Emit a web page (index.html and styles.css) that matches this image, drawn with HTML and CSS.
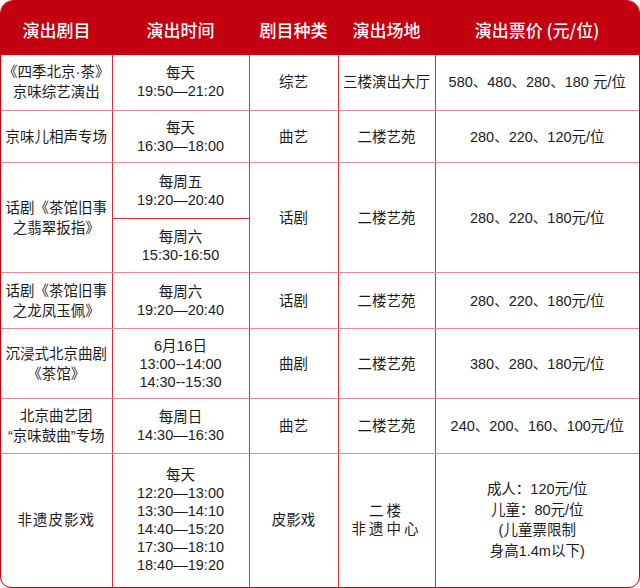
FILE: index.html
```html
<!DOCTYPE html>
<html lang="zh">
<head>
<meta charset="utf-8">
<title>演出信息</title>
<link rel="stylesheet" href="styles.css">
</head>
<body>
<div class="wrap">
<table class="sched">
<colgroup>
<col class="c-name"><col class="c-time"><col class="c-kind"><col class="c-venue"><col class="c-price">
</colgroup>
<thead>
<tr class="r-head">
<th>演出剧目</th><th>演出时间</th><th>剧目种类</th><th>演出场地</th><th>演出票价 (元/位)</th>
</tr>
</thead>
<tbody>
<tr class="r1">
<td class="name first">《四季北京·茶》<br>京味综艺演出</td>
<td class="time">每天<br>19:50—21:20</td>
<td>综艺</td>
<td>三楼演出大厅</td>
<td class="price last">580、480、280、180 元/位</td>
</tr>
<tr class="r2">
<td class="name first">京味儿相声专场</td>
<td class="time">每天<br>16:30—18:00</td>
<td>曲艺</td>
<td>二楼艺苑</td>
<td class="price last">280、220、120元/位</td>
</tr>
<tr class="r3a">
<td class="name first" rowspan="2">话剧《茶馆旧事<br>之翡翠扳指》</td>
<td class="time split">每周五<br>19:20—20:40</td>
<td rowspan="2">话剧</td>
<td rowspan="2">二楼艺苑</td>
<td class="price last" rowspan="2">280、220、180元/位</td>
</tr>
<tr class="r3b">
<td class="time">每周六<br>15:30-16:50</td>
</tr>
<tr class="r4">
<td class="name first">话剧《茶馆旧事<br>之龙凤玉佩》</td>
<td class="time">每周六<br>19:20—20:40</td>
<td>话剧</td>
<td>二楼艺苑</td>
<td class="price last">280、220、180元/位</td>
</tr>
<tr class="r5">
<td class="name first">沉浸式北京曲剧<br>《茶馆》</td>
<td class="time">6月16日<br>13:00--14:00<br>14:30--15:30</td>
<td>曲剧</td>
<td>二楼艺苑</td>
<td class="price last">380、280、180元/位</td>
</tr>
<tr class="r6">
<td class="name first">北京曲艺团<br>“京味鼓曲”专场</td>
<td class="time">每周日<br>14:30—16:30</td>
<td>曲艺</td>
<td>二楼艺苑</td>
<td class="price last">240、200、160、100元/位</td>
</tr>
<tr class="r7 end">
<td class="name first spaced">非遗皮影戏</td>
<td class="time">每天<br>12:20—13:00<br>13:30—14:10<br>14:40—15:20<br>17:30—18:10<br>18:40—19:20</td>
<td>皮影戏</td>
<td class="wide">二楼<br>非遗中心</td>
<td class="price tall last">成人：120元/位<br>儿童：80元/位<br>(儿童票限制<br>身高1.4m以下)</td>
</tr>
</tbody>
</table>
</div>
</body>
</html>
```
FILE: styles.css
```css
html, body {
  margin: 0;
  padding: 0;
  background: #ffffff;
}

.wrap {
  width: 640px;
  height: 588px;
  box-sizing: border-box;
  border: 1.5px solid #c3000f;
  border-radius: 13px 13px 11px 11px;
  overflow: hidden;
  background: #ffffff;
}

.sched {
  width: 100%;
  border-collapse: collapse;
  table-layout: fixed;
  font-family: "Liberation Sans", "Noto Sans CJK SC", sans-serif;
  font-size: 14.5px;
  color: #1b1b1b;
}

.c-name { width: 111px; }
.c-time { width: 137px; }
.c-kind { width: 89px; }
.c-venue { width: 97px; }
.c-price { width: auto; }

.sched th {
  background: #c3000f;
  color: #ffffff;
  font-family: "Noto Sans CJK SC", sans-serif;
  font-weight: 500;
  font-size: 17px;
  height: 49.5px;
  padding: 4px 0 0 0;
  border: none;
  text-align: center;
  vertical-align: middle;
}

.sched td {
  text-align: center;
  vertical-align: middle;
  padding: 0;
  line-height: 18px;
  border-left: 1px solid #d3303f;
  border-right: 1px solid #d3303f;
  border-top: 1px solid #e68c96;
  border-bottom: 1px solid #e68c96;
}

.sched td.first { border-left: none; }
.sched td.last { border-right: none; }
.sched tr.end td { border-bottom: none; }
.sched tr.r1 td { border-top: none; }

.sched td.name { line-height: 20px; }
.sched td.time { line-height: 18px; }
.sched td.split { border-bottom: 1px solid #d3303f; }
.sched td.spaced { letter-spacing: 1px; }
.sched td.wide { letter-spacing: 3px; line-height: 18px; }
.sched td.tall { line-height: 20.5px; }

.r1 { height: 56px; }
.r2 { height: 52px; }
.r3a { height: 56px; }
.r3b { height: 54px; }
.r4 { height: 56px; }
.r5 { height: 70px; }
.r6 { height: 55px; }
.r7 { height: 133px; }
```
